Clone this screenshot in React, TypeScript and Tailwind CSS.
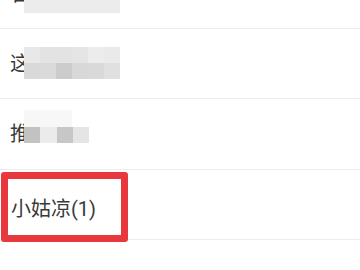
import React from "react";

const font = { fontFamily: 'Roboto, "Noto Sans CJK SC", sans-serif' };

export default function App() {
  return (
    <div className="w-[360px] h-[270px] overflow-hidden bg-white" style={font}>
      <div className="mt-[-41px] flex flex-col">
        {/* Row 1 */}
        <div className="relative h-[70px] border-b border-[#ececec] flex items-center pl-[11px]">
          <span className="text-[20px] leading-none text-[#3a3a3a]">百</span>
          <div className="absolute left-[24px] top-[22px] w-[96px] h-[32px] bg-[#ececec]" />
        </div>
        {/* Row 2 */}
        <div className="relative h-[70px] border-b border-[#ececec] flex items-center pl-[10px]">
          <span className="text-[20px] leading-none text-[#3a3a3a]">这</span>
          <div className="absolute left-[24px] top-[18px] grid grid-cols-[repeat(6,16px)] grid-rows-[repeat(2,16px)]">
            <div className="bg-[#e8e8e8]" />
            <div className="bg-[#e3e3e3]" />
            <div className="bg-[#e3e3e3]" />
            <div className="bg-[#e5e5e5]" />
            <div className="bg-[#ececec]" />
            <div className="bg-[#eaeaea]" />
            <div className="bg-[#d9d9d9]" />
            <div className="bg-[#dadada]" />
            <div className="bg-[#cccccc]" />
            <div className="bg-[#d8d8d8]" />
            <div className="bg-[#d9d9d9]" />
            <div className="bg-[#e0e0e0]" />
          </div>
        </div>
        {/* Row 3 */}
        <div className="relative h-[71px] border-b border-[#ececec] flex items-center pl-[10px]">
          <span className="text-[20px] leading-none text-[#3a3a3a]">推</span>
          <div className="absolute left-[24px] top-[11px] w-[48px] h-[17px] bg-[#f7f7f7]" />
          <div className="absolute left-[24px] top-[28px] flex h-[16px]">
            <div className="w-[16px] bg-[#c2c2c2]" />
            <div className="w-[17px] bg-[#ebebeb]" />
            <div className="w-[16px] bg-[#c7c7c7]" />
            <div className="w-[16px] bg-[#e5e5e5]" />
          </div>
        </div>
        {/* Row 4 */}
        <div className="relative h-[70px] border-b border-[#ececec] flex items-center pl-[11px] pt-[8px]">
          <span className="text-[20px] leading-none text-[#3a3a3a]">小姑凉(1)</span>
          <div className="absolute left-[1px] top-[2px] w-[127px] h-[70px] border-[7px] border-[#e8383d] rounded-[3px]" />
        </div>
        <div className="h-[70px]" />
      </div>
    </div>
  );
}
